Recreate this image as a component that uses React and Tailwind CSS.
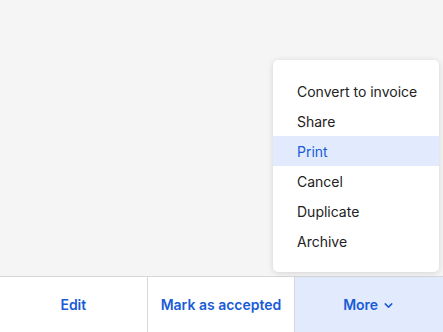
import React from 'react';
import { ChevronDown } from 'lucide-react';

const items = ['Convert to invoice', 'Share', 'Print', 'Cancel', 'Duplicate', 'Archive'];

const App = () => {
  return (
    <div className="w-[443px] h-[332px] bg-[#f5f5f5] flex flex-col relative overflow-hidden font-['Inter',sans-serif]">
      <div className="flex-1"></div>

      {/* Bottom action bar */}
      <div className="h-[56px] grid grid-cols-3 border-t border-[#d8d8d8] bg-white text-[14px] font-semibold text-[#1a5bd6]">
        <button className="flex items-center justify-center border-r border-[#d8d8d8]">Edit</button>
        <button className="flex items-center justify-center border-r border-[#d8d8d8]">Mark as accepted</button>
        <button className="flex items-center justify-center gap-1 bg-[#e1ebfd]">
          More <ChevronDown size={13} strokeWidth={2.75} className="mt-[2px]" />
        </button>
      </div>

      {/* Dropdown menu */}
      <div className="absolute left-[273px] top-[60px] w-[166px] bg-white rounded-[5px] py-4 shadow-[0_1px_6px_rgba(0,0,0,0.14)]">
        {items.map((item) => (
          <div
            key={item}
            className={`h-[30px] flex items-center pl-6 text-[14px] ${
              item === 'Print' ? 'bg-[#e1ebfd] text-[#1a5bd6]' : 'text-[#222]'
            }`}
          >
            {item}
          </div>
        ))}
      </div>
    </div>
  );
};

export default App;
